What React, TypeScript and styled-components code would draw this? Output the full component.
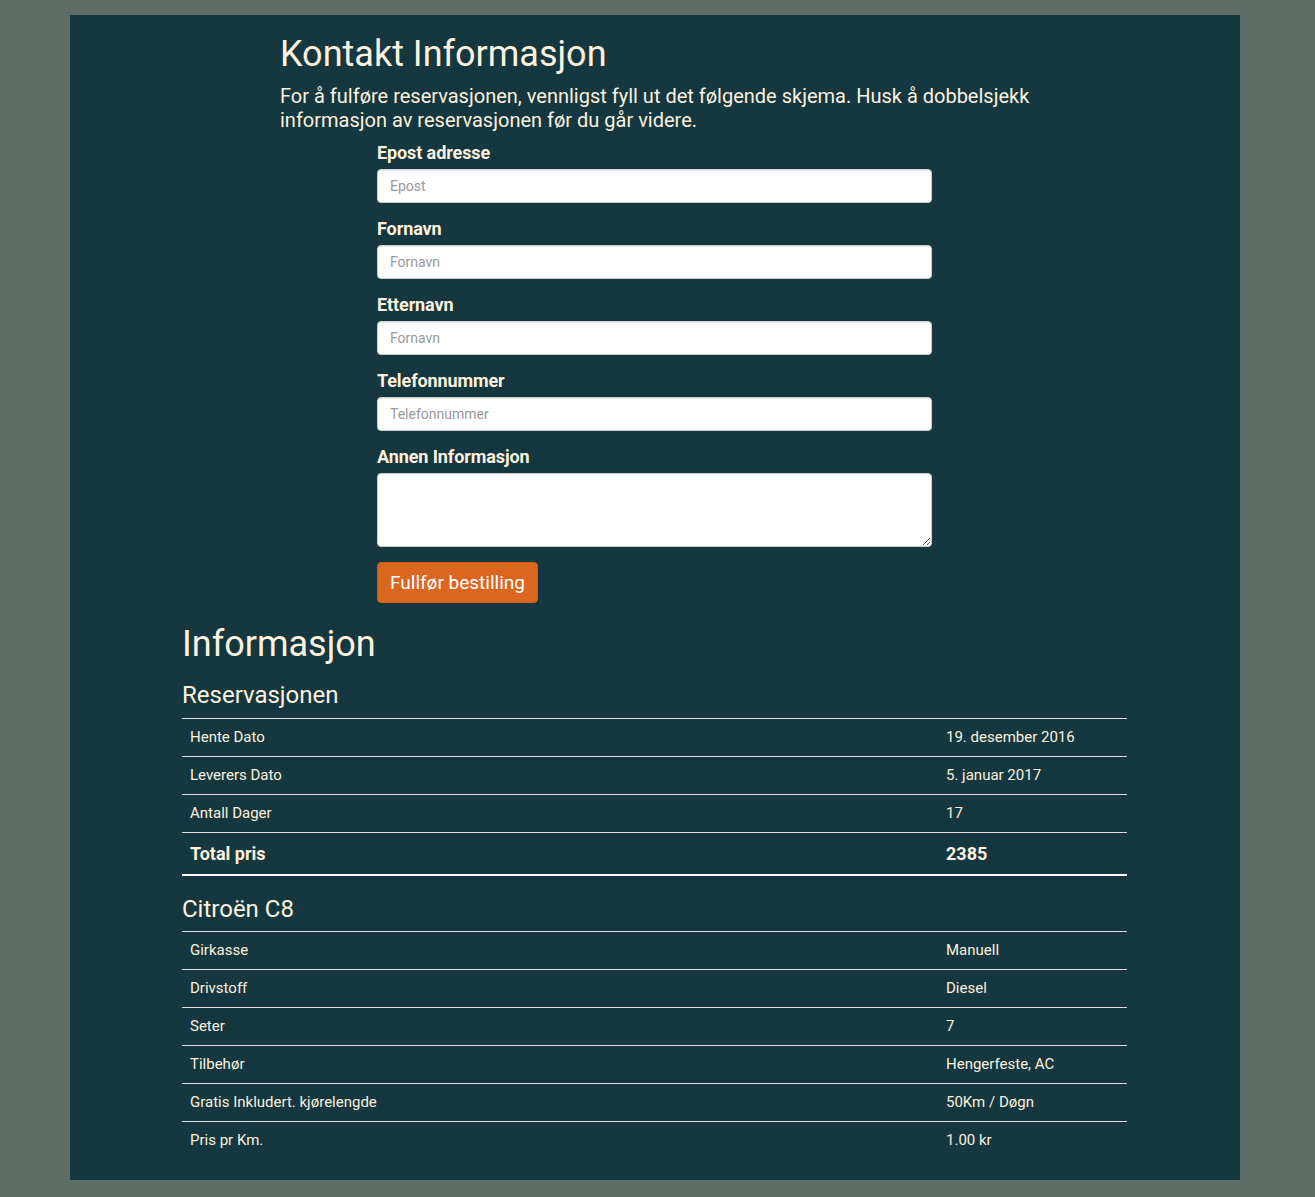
import styled, { createGlobalStyle } from "styled-components";

const GlobalStyle = createGlobalStyle`
  html, body {
    margin: 0;
    padding: 0;
    background: #5e6d65;
  }
  body {
    font-family: Roboto, "Noto Sans", "Liberation Sans", sans-serif;
    color: #fdf1df;
  }
  * {
    box-sizing: border-box;
  }
`;

const reservation = [
  { label: "Hente Dato", value: "19. desember 2016" },
  { label: "Leverers Dato", value: "5. januar 2017" },
  { label: "Antall Dager", value: "17" },
];

const car = [
  { label: "Girkasse", value: "Manuell" },
  { label: "Drivstoff", value: "Diesel" },
  { label: "Seter", value: "7" },
  { label: "Tilbehør", value: "Hengerfeste, AC" },
  { label: "Gratis Inkludert. kjørelengde", value: "50Km / Døgn" },
  { label: "Pris pr Km.", value: "1.00 kr" },
];

const fields = [
  { label: "Epost adresse", placeholder: "Epost", type: "email" },
  { label: "Fornavn", placeholder: "Fornavn", type: "text" },
  { label: "Etternavn", placeholder: "Fornavn", type: "text" },
  { label: "Telefonnummer", placeholder: "Telefonnummer", type: "tel" },
];

const App = () => {
  return (
    <>
      <GlobalStyle />
      <Panel>
        <ContactSection>
          <PageTitle>Kontakt Informasjon</PageTitle>
          <Lead>
            For å fulføre reservasjonen, vennligst fyll ut det følgende skjema.
            Husk å dobbelsjekk informasjon av reservasjonen før du går videre.
          </Lead>
          <Form onSubmit={(e) => e.preventDefault()}>
            {fields.map((f) => (
              <FormGroup key={f.label}>
                <Label>{f.label}</Label>
                <Input type={f.type} placeholder={f.placeholder} />
              </FormGroup>
            ))}
            <FormGroup>
              <Label>Annen Informasjon</Label>
              <TextArea />
            </FormGroup>
            <SubmitButton type="submit">Fullfør bestilling</SubmitButton>
          </Form>
        </ContactSection>

        <InfoSection>
          <InfoTitle>Informasjon</InfoTitle>
          <SubTitle>Reservasjonen</SubTitle>
          <Table>
            <tbody>
              {reservation.map((r) => (
                <tr key={r.label}>
                  <Cell>{r.label}</Cell>
                  <Cell>{r.value}</Cell>
                </tr>
              ))}
              <TotalRow>
                <TotalCell>Total pris</TotalCell>
                <TotalCell>2385</TotalCell>
              </TotalRow>
            </tbody>
          </Table>

          <SubTitle>Citroën C8</SubTitle>
          <Table>
            <tbody>
              {car.map((r) => (
                <tr key={r.label}>
                  <Cell>{r.label}</Cell>
                  <Cell>{r.value}</Cell>
                </tr>
              ))}
            </tbody>
          </Table>
        </InfoSection>
      </Panel>
    </>
  );
};

const Panel = styled.main`
  margin: 15px 75px 0 70px;
  background: #143740;
  padding: 0 0 21px;
  overflow: hidden;
`;

const ContactSection = styled.section`
  margin-left: 195px;
  width: 780px;
  padding: 0 15px;
`;

const PageTitle = styled.h1`
  font-size: 36px;
  font-weight: 400;
  line-height: 1.1;
  margin: 20px 0 9px;
`;

const Lead = styled.p`
  font-size: 20px;
  line-height: 24px;
  margin: 0 0 10px;
`;

const Form = styled.form`
  margin-left: 97px;
  width: 555px;
`;

const FormGroup = styled.div`
  margin-bottom: 15px;
`;

const Label = styled.label`
  display: block;
  font-size: 18px;
  font-weight: 700;
  line-height: 22px;
  letter-spacing: -0.1px;
  margin-bottom: 5px;
`;

const Input = styled.input`
  display: block;
  width: 100%;
  height: 34px;
  padding: 6px 12px;
  font-family: inherit;
  font-size: 14px;
  color: #555;
  background: #fff;
  border: 1px solid #ccc;
  border-radius: 4px;
  box-shadow: inset 0 1px 1px rgba(0, 0, 0, 0.075);

  &::placeholder {
    color: #999;
  }
`;

const TextArea = styled.textarea`
  display: block;
  width: 100%;
  height: 74px;
  padding: 6px 12px;
  font-family: inherit;
  font-size: 14px;
  background: #fff;
  border: 1px solid #ccc;
  border-radius: 4px;
  resize: vertical;
`;

const SubmitButton = styled.button`
  display: inline-block;
  height: 41px;
  padding: 0 12px;
  font-family: inherit;
  font-size: 19px;
  color: #fff;
  background: #da6620;
  border: 1px solid #d05e1a;
  border-radius: 4px;
  cursor: pointer;
`;

const InfoSection = styled.section`
  margin-left: 97px;
  width: 975px;
  padding: 0 15px;
`;

const InfoTitle = styled.h1`
  font-size: 36px;
  font-weight: 400;
  line-height: 1.1;
  margin: 22px 0 10px;
`;

const SubTitle = styled.h3`
  font-size: 24px;
  font-weight: 400;
  line-height: 1.1;
  margin: 18px 0 9px;
`;

const Table = styled.table`
  width: 100%;
  border-collapse: collapse;
  margin-bottom: 20px;

  &:last-child {
    margin-bottom: 0;
  }
`;

const Cell = styled.td`
  padding: 8px;
  font-size: 15px;
  line-height: 21px;
  border-top: 1px solid #ddd;
  vertical-align: top;

  &:first-child {
    width: 80%;
  }
`;

const TotalRow = styled.tr`
  border-bottom: 2px solid #fff;
`;

const TotalCell = styled(Cell)`
  font-size: 18px;
  font-weight: 700;
  line-height: 25px;
`;

export default App;
